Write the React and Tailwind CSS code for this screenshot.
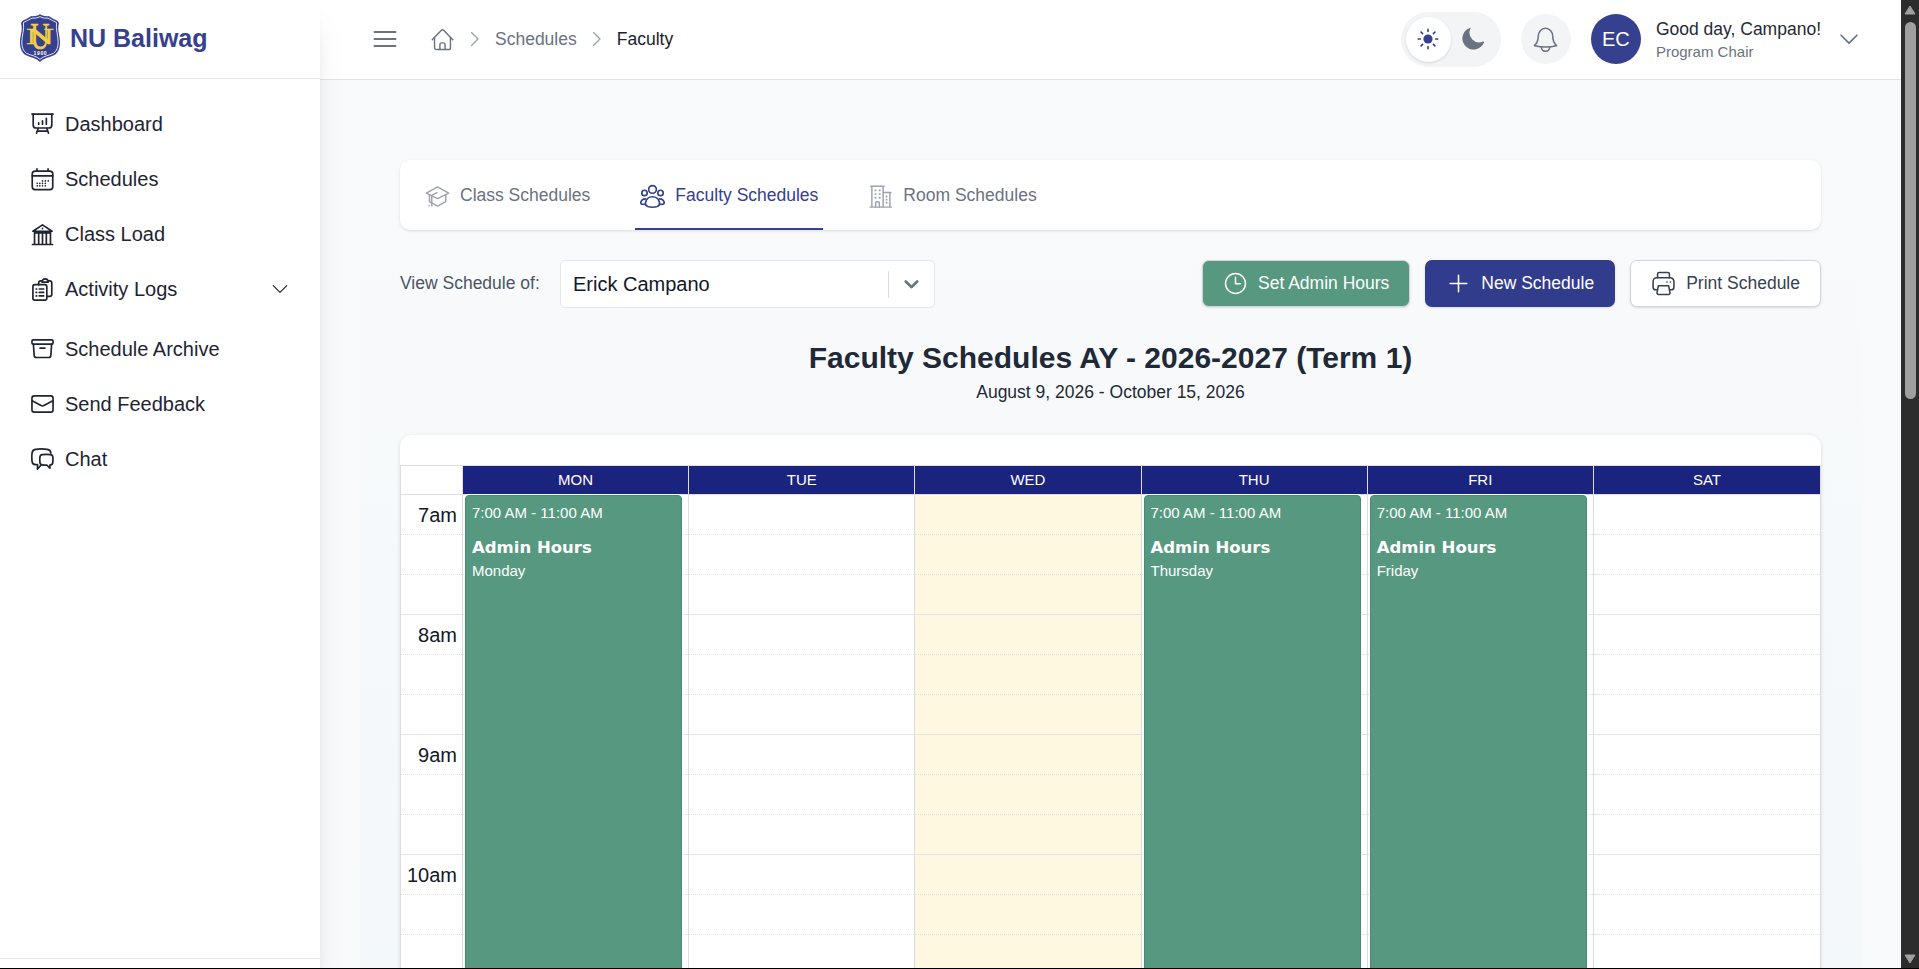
import React from "react";

const FONT = "font-['Liberation_Sans',Arial,sans-serif]";

function Svg({ className = "", sw = 1.5, children, vb = "0 0 24 24" }) {
  return (
    <svg
      viewBox={vb}
      className={"block shrink-0 " + className}
      fill="none"
      stroke="currentColor"
      strokeWidth={sw}
      strokeLinecap="round"
      strokeLinejoin="round"
    >
      {children}
    </svg>
  );
}

const icons = {
  dashboard: (
    <>
      <path d="M1 2.2h22" />
      <path d="M2.3 2.2v11.3a3.2 3.2 0 0 0 3.2 3.2h13a3.2 3.2 0 0 0 3.2-3.2V2.2" />
      <path d="M8 12.8v-1.6M12 12.8V9.2M16 12.8V6.6" />
      <path d="M7.5 17l-1.7 5M16.500 17l1.700 5M6.600 20h10.800" />
    </>
  ),
  calendar: (
    <>
      <rect x="1.300" y="3.200" width="21.400" height="19.300" rx="3" />
      <path d="M1.300 8.300h21.400M6.200 1v2.200M17.800 1v2.200" />
      <path d="M12 13.500h0M15 13.500h0M18 13.500h0M6.500 16h0M9.200 16h0M12 16h0M15 16h0M6.500 18.600h0M9.200 18.600h0M12 18.600h0M15 18.600h0" />
    </>
  ),
  bank: (
    <>
      <path d="M2 8.600L12 2l10 6.600z" />
      <path d="M12 5.700v.2M3.700 9v12.600M20.300 9v12.600M8 11v10.500M12 11v10.500M16 11v10.500M3.700 10.300h16.600M1.500 22.400h21" />
    </>
  ),
  logs: (
    <>
      <rect x="2" y="7" width="14.500" height="16" rx="2" />
      <path d="M8 7V5.200a2.200 2.200 0 0 1 2.200-2.200h1.300M17.800 3h1.700a2.200 2.200 0 0 1 2.200 2.200V17a2.200 2.200 0 0 1-2.200 2.200h-3" />
      <path d="M11.500 4.300c0-1.900 1.200-3.300 3.200-3.300s3.200 1.400 3.200 3.300z" />
      <path d="M5.400 11.500h.5M8.700 11.500h4.500M5.400 15h.5M8.700 15h4.500M5.400 18.700h.5M8.700 18.700h4.500" />
    </>
  ),
  archive: (
    <>
      <rect x="1" y="3" width="22" height="4.400" rx="1.200" />
      <path d="M2.500 7.500l.8 11.700a2.300 2.300 0 0 0 2.300 2.200h12.800a2.300 2.300 0 0 0 2.300-2.200l.8-11.700M9.500 11.700h5" />
    </>
  ),
  mail: (
    <>
      <rect x="1" y="4" width="22" height="17" rx="2.500" />
      <path d="M1.200 9.200l9.300 5a3.200 3.200 0 0 0 3 0l9.300-5" />
    </>
  ),
  chat: (
    <>
      <path d="M6.800 22.800v-4.500H4.500c-2 0-3.200-1.400-3.400-3.300-.3-3-.3-6 0-8.700.2-2.200 1.500-3.500 3.600-3.800 4-.6 8.300-.6 12.300 0 2.200.3 3.500 1.500 3.800 3.800" />
      <path d="M6.800 22.800l3.800-4" />
      <path d="M11.800 8c3-.4 5.700-.4 8.500 0 1.500.2 2.400 1.100 2.500 2.600.2 2 .2 3.600 0 5.400-.1 1.600-1 2.500-2.500 2.700l-.6.100v3.400l-3-3.200c-1.700 0-3.200 0-4.900-.3-1.500-.2-2.400-1.100-2.500-2.700-.2-1.800-.2-3.400 0-5.400.1-1.500 1-2.400 2.500-2.600z" />
    </>
  ),
};

const nav = [
  ["Dashboard", "dashboard"],
  ["Schedules", "calendar"],
  ["Class Load", "bank"],
  ["Activity Logs", "logs"],
  ["Schedule Archive", "archive"],
  ["Send Feedback", "mail"],
  ["Chat", "chat"],
];

function Logo() {
  return (
    <svg viewBox="0 0 40 48" className="block h-[48px] w-[40px] shrink-0">
      <path
        d="M20 0C18.600 1.600 14.500 2.600 11.500 2C8 4.200 4.500 5.800 2 7.200C1 8.500 1 9.500 1.500 11.500C2.500 17 0 22 0 28C0 34 1.500 38.500 5.500 41C10 43.300 16.500 44 20 48C23.500 44 30 43.300 34.500 41C38.500 38.500 40 34 40 28C40 22 37.500 17 38.500 11.500C39 9.500 39 8.500 38 7.200C35.500 5.800 32 4.200 28.500 2C25.500 2.600 21.400 1.600 20 0Z"
        fill="#35408e"
      />
      <path
        d="M20 2.600C17.500 4 14.500 4.500 12 4.100C9 5.800 6 7.200 3.500 8.500C4.300 16 2 21 1.800 28C1.800 33 3.300 37.300 6.600 39.400C11.200 41.500 16.500 42 20 45.400C23.500 42 28.800 41.500 33.400 39.400C36.700 37.300 38.200 33 38.200 28C38 21 35.700 16 36.500 8.500C34 7.200 31 5.800 28 4.100C25.500 4.500 22.500 4 20 2.600Z"
        fill="none"
        stroke="#e3e5f1"
        strokeWidth="1"
      />
      <g fontFamily="'Liberation Serif', serif" fontWeight="400" textAnchor="middle" fill="#f3cf45" stroke="#f3cf45">
        <text x="20" y="30" fontSize="24" strokeWidth="0.500" textLength="28" lengthAdjust="spacingAndGlyphs">N</text>
        <text x="20" y="34.500" fontSize="37" strokeWidth="0.500" textLength="19" lengthAdjust="spacingAndGlyphs">U</text>
      </g>
      <text x="20.400" y="40.600" fontFamily="'Liberation Sans', sans-serif" fontWeight="700" fontSize="5" letterSpacing="0.700" textAnchor="middle" fill="#ffffff">1900</text>
    </svg>
  );
}

function Sidebar() {
  return (
    <aside className="relative z-10 flex w-[320px] shrink-0 flex-col bg-white shadow-[0_25px_31px_-6px_rgba(0,0,0,0.1),0_10px_12px_-7px_rgba(0,0,0,0.1)]">
      <div className="flex h-[79px] shrink-0 items-center gap-[10px] border-b border-[#e5e5e5] pb-[2px] pl-[20px]">
        <Logo />
        <span className="text-[25px] leading-[30px] font-bold text-[#35408e]">NU Baliwag</span>
      </div>
      <nav className="flex grow flex-col pt-[17px]">
        {nav.map(([label, icon], i) => (
          <div
            key={label}
            className={
              "flex h-[55px] shrink-0 items-center gap-[10px] pr-[31px] pl-[30px] text-[#1e2433]" +
              (i === 4 ? " mt-[5px]" : "")
            }
          >
            <Svg className={"h-[25px] w-[25px] p-px" + (i > 0 && i < 4 ? " translate-y-px" : "")} sw={1.75}>{icons[icon]}</Svg>
            <span className="text-[20px] leading-[30px]">{label}</span>
            {icon === "logs" && (
              <Svg className="ml-auto h-[18px] w-[18px]" sw={1.6}>
                <path d="M3 7.500l9 9 9-9" />
              </Svg>
            )}
          </div>
        ))}
      </nav>
      <div className="h-[10px] shrink-0 border-t border-[#e5e5e5]" />
    </aside>
  );
}

function Crumb() {
  return (
    <Svg className="h-[16px] w-[10px] text-[#9ca3af]" vb="0 0 10 16" sw={1.400}>
      <path d="M1.500 1.500l6.500 6.500-6.500 6.500" />
    </Svg>
  );
}

function Header() {
  return (
    <header className="flex h-[80px] shrink-0 items-center border-b border-[#e5e5e5] bg-white pr-[42px] pb-px pl-[53px]">
      <Svg className="h-[24px] w-[24px] text-[#6b7280]" sw={1.900}>
        <path d="M1.500 5h21M1.500 12h21M1.500 19h21" />
      </Svg>
      <Svg className="ml-[34px] h-[23px] w-[23px] text-[#6b7280]" sw={1.500}>
        <path d="M1.300 12.300L10.600 2.500a2 2 0 0 1 2.800 0l9.300 9.800" />
        <path d="M3.700 10v10.500a2 2 0 0 0 2 2h12.600a2 2 0 0 0 2-2V10" />
        <path d="M9.300 22.500v-5a2 2 0 0 1 2-2h1.400a2 2 0 0 1 2 2v5" />
      </Svg>
      <div className="ml-[16px] flex items-center text-[17.500px] leading-[25px]">
        <Crumb />
        <span className="ml-[15px] text-[#6b7280]">Schedules</span>
        <span className="ml-[15px]"><Crumb /></span>
        <span className="ml-[15px] text-[#1a202e]">Faculty</span>
      </div>
      <div className="ml-auto flex items-center">
        <div className="flex h-[55px] w-[100px] items-center rounded-full bg-[#f3f4f6] px-[5px]">
          <div className="flex h-[45px] w-[45px] items-center justify-center rounded-full bg-white text-[#35408e] shadow-sm">
            <svg viewBox="0 0 22 22" className="block h-[22px] w-[22px]" stroke="currentColor" strokeWidth="1.600" strokeLinecap="round">
              <circle cx="11" cy="11" r="4.600" fill="currentColor" stroke="none" />
              <path d="M11 1.200v2.200M11 18.600v2.200M1.200 11h2.200M18.600 11h2.200M4.100 4.100l1.500 1.500M16.400 16.400l1.500 1.500M4.100 17.900l1.500-1.500M16.400 5.600l1.500-1.500" />
            </svg>
          </div>
          <div className="flex h-[45px] w-[45px] items-center justify-center text-[#6b7280]">
            <svg viewBox="0 0 24 24" className="block h-[24px] w-[24px]" fill="currentColor">
              <path d="M9.500 1.500a.6.6 0 0 0-.8-.6A11.200 11.200 0 1 0 23.100 15.300a.6.6 0 0 0-.8-.8A9.700 9.700 0 0 1 9.500 1.500z" />
            </svg>
          </div>
        </div>
        <div className="ml-[20px] flex h-[50px] w-[50px] items-center justify-center rounded-full bg-[#f3f4f6] text-[#6b7280]">
          <Svg className="h-[25px] w-[25px]" sw={1.500}>
            <path d="M5 9.200C5 5 8 1.200 12 1.200S19 5 19 9.200c0 3.800.8 6.300 3.600 8.700-6.600 1.700-14.600 1.700-21.200 0C4.200 15.500 5 13 5 9.200z" />
            <path d="M8 19.400c.2 2.300 1.800 3.800 4 3.800s3.800-1.500 4-3.800" />
          </Svg>
        </div>
        <div className="ml-[20px] flex h-[50px] w-[50px] items-center justify-center rounded-full bg-[#35408e] text-[20px] text-white">EC</div>
        <div className="ml-[15px] flex flex-col">
          <span className="text-[17.500px] leading-[25px] text-[#1f2937]">Good day, Campano!</span>
          <span className="text-[15px] leading-[20px] text-[#6b7280]">Program Chair</span>
        </div>
        <Svg className="ml-[18px] h-[20px] w-[20px] text-[#6b7280]" sw={2}>
          <path d="M2.500 7.500l9.500 9.500 9.500-9.500" />
        </Svg>
      </div>
    </header>
  );
}

function Tabs() {
  return (
    <div className="flex h-[70px] shrink-0 gap-[40px] rounded-[10px] bg-white px-[20px] text-[17.500px] leading-[25px] text-[#6b7280] shadow-sm">
      <div className="flex items-center gap-[10px] border-b-2 border-transparent px-[5px] pt-[5px]">
        <Svg className="h-[25px] w-[25px] text-[#9ca3af]" sw={1.400}>
          <path d="M1.300 8.700L12 2.800l10.700 5.900L12 14z" />
          <path d="M4.300 10.500V17l7.700 4.200 7.900-4.200v-6.500" />
          <path d="M11.500 8.300L6.500 11v10M3.800 20.800h.2" />
        </Svg>
        <span className="-translate-y-px">Class Schedules</span>
      </div>
      <div className="flex items-center gap-[10px] border-b-2 border-[#35408e] px-[5px] pt-[5px] text-[#35408e]">
        <Svg className="h-[25px] w-[25px]" sw={1.600}>
          <circle cx="12" cy="5.200" r="3.700" />
          <circle cx="4.300" cy="8.600" r="2.600" />
          <circle cx="19.700" cy="8.600" r="2.600" />
          <path d="M12 12.200c3.400 0 6 2.400 6.700 5.800.4 2-.5 3-2.200 3.600-2.900.9-6.100.9-9 0C5.800 21 4.900 20 5.300 18c.7-3.400 3.300-5.800 6.700-5.800z" />
          <path d="M5.400 14.300c-2.200-.1-4 1.300-4.600 3.300-.2.900.2 1.500 1.100 1.700l3.200.4M18.600 14.300c2.200-.1 4 1.300 4.600 3.300.2.900-.2 1.500-1.100 1.700l-3.200.4" />
        </Svg>
        <span className="-translate-y-px">Faculty Schedules</span>
      </div>
      <div className="flex items-center gap-[10px] border-b-2 border-transparent px-[5px] pt-[5px]">
        <Svg className="h-[25px] w-[25px] text-[#9ca3af]" sw={1.400}>
          <path d="M2 22.200h20.500M3.700 22V2.200h10.800V22M2.600 2.200h13M14.500 8.200H21V22M14.500 8.200h7.500" />
          <path d="M7.300 22v-4a1 1 0 0 1 1-1h1.600a1 1 0 0 1 1 1v4" />
          <path strokeWidth="1.700" d="M7 6.200h.4M11 6.200h.4M7 9.700h.4M11 9.700h.4M7 13.200h.4M11 13.200h.4M17.700 12h.2M17.700 15h.2M17.700 18h.2" />
        </Svg>
        <span className="-translate-y-px">Room Schedules</span>
      </div>
    </div>
  );
}

function Toolbar() {
  return (
    <div className="mt-[30px] flex h-[48px] shrink-0 items-start text-[17.500px] leading-[25px]">
      <span className="mt-[11px] w-[160px] text-[#4b5563]">View Schedule of:</span>
      <div className="flex h-[48px] w-[375px] items-center rounded-[5px] border border-[#e5e7eb] bg-white pl-[12px] text-[20px] text-[#111827]">
        <span>Erick Campano</span>
        <div className="mr-[12px] ml-auto h-[27px] w-px bg-[#d9dbe0]" />
        <Svg className="mr-[12px] h-[21px] w-[21px] text-[#6b7280]" sw={3.2}>
          <path d="M5.500 8.500l6.500 6.500 6.500-6.500" />
        </Svg>
      </div>
      <div className="ml-auto flex gap-[15px]">
        <div className="flex h-[47px] items-center gap-[10px] rounded-[7px] border border-[#d1d5db] bg-[#579980] px-[20px] text-white shadow-sm">
          <Svg className="h-[25px] w-[25px]" sw={1.400}>
            <circle cx="12" cy="12" r="9.600" />
            <path d="M12 6v6.300h4.800" />
          </Svg>
          <span>Set Admin Hours</span>
        </div>
        <div className="flex h-[47px] items-center gap-[10px] rounded-[7px] bg-[#313c8c] px-[21px] text-white shadow-sm">
          <Svg className="h-[25px] w-[25px]" sw={1.500}>
            <path d="M12 4v16M4 12h16" />
          </Svg>
          <span>New Schedule</span>
        </div>
        <div className="flex h-[47px] items-center gap-[10px] rounded-[7px] border border-[#d1d5db] bg-white px-[20px] text-[#374151] shadow-sm">
          <Svg className="h-[25px] w-[25px]" sw={1.500}>
            <path d="M6.300 6.500V3a1.600 1.600 0 0 1 1.600-1.600h8.200A1.600 1.600 0 0 1 17.700 3v3.500" />
            <path d="M6 18H4.500a2.500 2.500 0 0 1-2.500-2.500V10a3.500 3.500 0 0 1 3.500-3.500h13A3.500 3.500 0 0 1 22 10v5.500a2.500 2.500 0 0 1-2.500 2.500H18" />
            <path d="M7 14.200h10l1.200 6.800a1.400 1.400 0 0 1-1.400 1.600H7.200A1.400 1.400 0 0 1 5.800 21zM15.300 10.500h.1M18.500 10.500h.1" />
          </Svg>
          <span>Print Schedule</span>
        </div>
      </div>
    </div>
  );
}

const days = [
  ["MON", "Monday"],
  ["TUE", null],
  ["WED", null],
  ["THU", "Thursday"],
  ["FRI", "Friday"],
  ["SAT", null],
];
const hours = ["7am", "8am", "9am", "10am"];

function Slots({ labels }) {
  return hours.map((h) => (
    <div key={h}>
      <div className="h-[40px] border-b border-dotted border-[#dddddd] pt-[5px] pr-[5px] text-right text-[20px] leading-[30px] text-[#111827]">
        {labels ? h : null}
      </div>
      <div className="h-[40px] border-b border-dotted border-[#dddddd]" />
      <div className="h-[40px] border-b border-[#e4e4e6]" />
    </div>
  ));
}

function Calendar() {
  return (
    <div className="mt-[30px] flex h-[600px] shrink-0 flex-col rounded-t-[12px] bg-white pt-[30px] shadow-[0_1px_4px_rgba(0,0,0,0.12)]">
      <div className="grid grow grid-cols-[62px_repeat(6,minmax(0,1fr))] grid-rows-[29px_1fr] border-x border-t border-[#dddddd]">
        <div className="border-r border-b border-[#dddddd]" />
        {days.map(([d], i) => (
          <div
            key={d}
            className={
              "flex items-center justify-center border-b border-[#dddddd] bg-[#1a237e] text-[15px] leading-[20px] text-white" +
              (i < 5 ? " border-r" : "")
            }
          >
            {d}
          </div>
        ))}
        <div className="border-r border-[#dddddd]">
          <Slots labels />
        </div>
        {days.map(([d, name], i) => (
          <div
            key={d}
            className={
              "relative border-[#dddddd]" + (i < 5 ? " border-r" : "") + (d === "WED" ? " bg-[#fff8e1]" : "")
            }
          >
            <Slots />
            {name && (
              <div className="absolute top-0 right-[6px] left-[2px] h-[480px] rounded-[4px] border border-[#478c71] bg-[#579980] px-[6px] text-[15px] leading-[20px] text-white shadow-[0_0_0_1px_#ffffff]">
                <div className="mt-[7px]">7:00 AM - 11:00 AM</div>
                <div className="mt-[12px] font-['DejaVu_Sans',sans-serif] text-[16.5px] leading-[25px] font-bold">Admin Hours</div>
                <div className="mt-px">{name}</div>
              </div>
            )}
          </div>
        ))}
      </div>
    </div>
  );
}

function Scrollbar() {
  return (
    <div className="flex w-[18px] shrink-0 flex-col items-center bg-[#2c2c2c] pt-[5px] pb-[4px]">
      <svg viewBox="0 0 12 10" className="block h-[10px] w-[12px]" fill="#9f9f9f" stroke="#9f9f9f" strokeLinejoin="round">
        <path d="M6 1l5 8H1z" />
      </svg>
      <div className="mt-[7px] h-[377px] w-[11px] rounded-full bg-[#9f9f9f]" />
      <svg viewBox="0 0 12 10" className="mt-auto block h-[10px] w-[12px]" fill="#9f9f9f" stroke="#9f9f9f" strokeLinejoin="round">
        <path d="M6 9l5-8H1z" />
      </svg>
    </div>
  );
}

export default function App() {
  return (
    <div className={"flex h-[969px] w-[1919px] flex-col overflow-hidden bg-[#f9fafb] " + FONT}>
      <div className="flex h-[968px] shrink-0 overflow-hidden">
        <Sidebar />
        <div className="flex min-w-0 grow flex-col overflow-hidden">
          <Header />
          <main className="mr-[40px] ml-[40px] flex h-[955px] shrink-0 flex-col bg-linear-to-b from-[#f9fafb] to-[#f3f8fb] px-[40px] pt-[80px]">
            <Tabs />
            <Toolbar />
            <h1 className="mt-[30px] text-center text-[30px] leading-[40px] font-bold text-[#1f2937]">
              Faculty Schedules AY - 2026-2027 (Term 1)
            </h1>
            <p className="mt-[2px] text-center text-[17.500px] leading-[25px] text-[#1f2937]">August 9, 2026 - October 15, 2026</p>
            <Calendar />
          </main>
        </div>
        <Scrollbar />
      </div>
      <div className="h-px shrink-0 bg-black" />
    </div>
  );
}
